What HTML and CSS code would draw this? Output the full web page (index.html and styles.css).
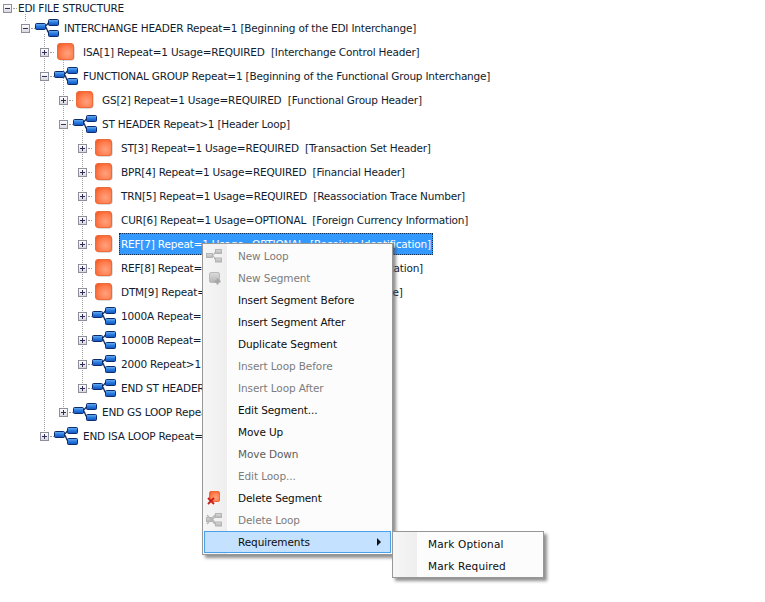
FILE: index.html
```html
<!DOCTYPE html>
<html lang="en">
<head>
<meta charset="utf-8">
<title>EDI File Structure</title>
<link rel="stylesheet" href="styles.css">
</head>
<body>
<svg class="defs" width="0" height="0" aria-hidden="true">
  <defs>
    <linearGradient id="blue" x1="0" y1="0" x2="0" y2="1"><stop offset="0" stop-color="#6fb4f2"/><stop offset=".5" stop-color="#2b7ae0"/><stop offset="1" stop-color="#0e50c0"/></linearGradient>
    <radialGradient id="seg" cx=".62" cy=".62" r=".72"><stop offset="0" stop-color="#ffa27e"/><stop offset=".6" stop-color="#ff7f50"/><stop offset="1" stop-color="#f5602c"/></radialGradient>
    <linearGradient id="grey" x1="0" y1="0" x2="0" y2="1"><stop offset="0" stop-color="#dcdcdc"/><stop offset="1" stop-color="#b4b4b4"/></linearGradient>
    <symbol id="loop" viewBox="0 0 24 18">
      <path d="M9 7.500C13 7.500 11.500 3.500 15 3.500M9 7.500C13 7.500 11.500 14.500 15 14.500" fill="none" stroke="#14305e" stroke-width="1.300"/>
      <rect x=".5" y="4.500" width="10" height="6" rx="1" fill="url(#blue)" stroke="#0c2c6a"/>
      <rect x="13.500" y=".5" width="10" height="6" rx="1" fill="url(#blue)" stroke="#0c2c6a"/>
      <rect x="13.500" y="11.500" width="10" height="6" rx="1" fill="url(#blue)" stroke="#0c2c6a"/>
    </symbol>
    <symbol id="segment" viewBox="0 0 18 18">
      <rect x="1.500" y="1.500" width="16" height="16" rx="3" fill="#c2bcb6"/>
      <rect x=".5" y=".5" width="16" height="16" rx="2.500" fill="url(#seg)" stroke="#ee6a38"/>
    </symbol>
    <symbol id="loop-off" viewBox="0 0 16 14">
      <path d="M6 6.500C9 6.500 8 2.500 10 2.500M6 6.500C9 6.500 8 11 10 11" fill="none" stroke="#aaa"/>
      <rect x=".5" y="4.500" width="6" height="4" fill="url(#grey)" stroke="#b4b4b4"/>
      <rect x="9.500" y=".5" width="6" height="4" fill="url(#grey)" stroke="#b4b4b4"/>
      <rect x="9.500" y="9" width="6" height="4" fill="url(#grey)" stroke="#b4b4b4"/>
    </symbol>
  </defs>
</svg>

<div class="tree">
  <svg class="guides" width="100" height="450" aria-hidden="true">
    <path d="M25.500 14V22M44.500 34V434M63.500 58V410M82.500 130V386" fill="none" stroke="#a0a0a0" stroke-dasharray="1 1"/>
  </svg>

  <div class="row root"><span class="exp minus"></span><span class="dots"></span><span class="label">EDI FILE STRUCTURE</span></div>
  <div class="row d1"><span class="exp minus"></span><span class="dots"></span><svg class="ico-loop"><use href="#loop"/></svg><span class="label">INTERCHANGE HEADER Repeat=1 [Beginning of the EDI Interchange]</span></div>
  <div class="row d2"><span class="exp plus"></span><span class="dots"></span><svg class="ico-seg"><use href="#segment"/></svg><span class="label">ISA[1] Repeat=1 Usage=REQUIRED&nbsp; [Interchange Control Header]</span></div>
  <div class="row d2"><span class="exp minus"></span><span class="dots"></span><svg class="ico-loop"><use href="#loop"/></svg><span class="label">FUNCTIONAL GROUP Repeat=1 [Beginning of the Functional Group Interchange]</span></div>
  <div class="row d3"><span class="exp plus"></span><span class="dots"></span><svg class="ico-seg"><use href="#segment"/></svg><span class="label">GS[2] Repeat=1 Usage=REQUIRED&nbsp; [Functional Group Header]</span></div>
  <div class="row d3"><span class="exp minus"></span><span class="dots"></span><svg class="ico-loop"><use href="#loop"/></svg><span class="label">ST HEADER Repeat&gt;1 [Header Loop]</span></div>
  <div class="row d4"><span class="exp plus"></span><span class="dots"></span><svg class="ico-seg"><use href="#segment"/></svg><span class="label">ST[3] Repeat=1 Usage=REQUIRED&nbsp; [Transaction Set Header]</span></div>
  <div class="row d4"><span class="exp plus"></span><span class="dots"></span><svg class="ico-seg"><use href="#segment"/></svg><span class="label">BPR[4] Repeat=1 Usage=REQUIRED&nbsp; [Financial Header]</span></div>
  <div class="row d4"><span class="exp plus"></span><span class="dots"></span><svg class="ico-seg"><use href="#segment"/></svg><span class="label">TRN[5] Repeat=1 Usage=REQUIRED&nbsp; [Reassociation Trace Number]</span></div>
  <div class="row d4"><span class="exp plus"></span><span class="dots"></span><svg class="ico-seg"><use href="#segment"/></svg><span class="label">CUR[6] Repeat=1 Usage=OPTIONAL&nbsp; [Foreign Currency Information]</span></div>
  <div class="row d4"><span class="exp plus"></span><span class="dots"></span><svg class="ico-seg"><use href="#segment"/></svg><span class="label selected">REF[7] Repeat=1 Usage=OPTIONAL&nbsp; [Receiver Identification]</span></div>
  <div class="row d4"><span class="exp plus"></span><span class="dots"></span><svg class="ico-seg"><use href="#segment"/></svg><span class="label">REF[8] Repeat=1 Usage=OPTIONAL&nbsp; [Sender Identification]</span></div>
  <div class="row d4"><span class="exp plus"></span><span class="dots"></span><svg class="ico-seg"><use href="#segment"/></svg><span class="label">DTM[9] Repeat=1 Usage=OPTIONAL&nbsp; [Production Date]</span></div>
  <div class="row d4"><span class="exp plus"></span><span class="dots"></span><svg class="ico-loop"><use href="#loop"/></svg><span class="label">1000A Repeat=1</span></div>
  <div class="row d4"><span class="exp plus"></span><span class="dots"></span><svg class="ico-loop"><use href="#loop"/></svg><span class="label">1000B Repeat=1</span></div>
  <div class="row d4"><span class="exp plus"></span><span class="dots"></span><svg class="ico-loop"><use href="#loop"/></svg><span class="label">2000 Repeat&gt;1</span></div>
  <div class="row d4"><span class="exp plus"></span><span class="dots"></span><svg class="ico-loop"><use href="#loop"/></svg><span class="label">END ST HEADER</span></div>
  <div class="row d3"><span class="exp plus"></span><span class="dots"></span><svg class="ico-loop"><use href="#loop"/></svg><span class="label">END GS LOOP Repeat</span></div>
  <div class="row d2"><span class="exp plus"></span><span class="dots"></span><svg class="ico-loop"><use href="#loop"/></svg><span class="label">END ISA LOOP Repeat=</span></div>
</div>

<div class="menu main-menu">
  <div class="item off"><svg class="mi mi-loop"><use href="#loop-off"/></svg>New Loop</div>
  <div class="item off"><svg class="mi" viewBox="0 0 16 16"><rect x="3.500" y="2.500" width="10" height="10" rx="1.500" fill="url(#grey)" stroke="#bbb"/><path d="M11.500 8.500v6M8.500 11.500h6" stroke="#a4a4a4" stroke-width="2"/></svg>New Segment</div>
  <div class="item">Insert Segment Before</div>
  <div class="item">Insert Segment After</div>
  <div class="item">Duplicate Segment</div>
  <div class="item off">Insert Loop Before</div>
  <div class="item off">Insert Loop After</div>
  <div class="item">Edit Segment...</div>
  <div class="item">Move Up</div>
  <div class="item off-soft">Move Down</div>
  <div class="item off">Edit Loop...</div>
  <div class="item"><svg class="mi" viewBox="0 0 16 16"><rect x="3.500" y="1.500" width="10" height="10" rx="1.500" fill="url(#seg)" stroke="#ee6a38"/><path d="M2 8l6 6M8 8l-6 6" stroke="#c8201a" stroke-width="1.800"/></svg>Delete Segment</div>
  <div class="item off"><svg class="mi mi-loop"><use href="#loop-off"/><path d="M1 2l8 9M9 2l-8 9" stroke="#b8b8b8" stroke-width="1.500"/></svg>Delete Loop</div>
  <div class="item active">Requirements<span class="arrow"></span></div>
</div>

<div class="menu sub-menu">
  <div class="item">Mark Optional</div>
  <div class="item">Mark Required</div>
</div>
</body>
</html>
```

FILE: styles.css
```css
html, body {
  margin: 0;
  padding: 0;
  background: #fff;
}
body {
  position: relative;
  width: 765px;
  height: 602px;
  overflow: hidden;
  font-family: "DejaVu Sans", "Liberation Sans", sans-serif;
  font-size: 10.5px;
  color: #101c30;
}
.defs { position: absolute; }

.tree { position: relative; }
.guides { position: absolute; left: 0; top: 0; }

.row {
  position: relative;
  display: flex;
  align-items: center;
  height: 24px;
  white-space: nowrap;
}
.root { height: 16px; padding-left: 3px; }
.d1 { padding-left: 21px; }
.d2 { padding-left: 40px; }
.d3 { padding-left: 59px; }
.d4 { padding-left: 78px; }

.exp {
  position: relative;
  flex: none;
  box-sizing: border-box;
  width: 9px;
  height: 9px;
  border: 1px solid #8f8f9c;
  background: linear-gradient(#fff, #d8d8de);
}
.exp::before {
  content: "";
  position: absolute;
  left: 1px;
  top: 3px;
  width: 5px;
  height: 1px;
  background: #30305a;
}
.plus::after {
  content: "";
  position: absolute;
  left: 3px;
  top: 1px;
  width: 1px;
  height: 5px;
  background: #30305a;
}
.dots {
  flex: none;
  width: 4px;
  margin: 0 1px;
  border-top: 1px dotted #a0a0a0;
}
.ico-loop { flex: none; width: 24px; height: 18px; margin-left: -1px; }
.ico-seg { flex: none; width: 18px; height: 18px; margin-left: 2px; }

.label {
  margin-left: 5px;
  letter-spacing: -0.2px;
}
.root .label { margin-left: 0; }
.ico-seg + .label { margin-left: 8px; }
.selected {
  margin-left: 6px !important;
  box-sizing: border-box;
  width: 314px;
  height: 22px;
  line-height: 20px;
  padding-left: 1px;
  color: #fff;
  background: #3399ff;
  border: 1px dotted #10305c;
}

.menu {
  position: absolute;
  box-sizing: border-box;
  border: 1px solid #979797;
  padding: 1px;
  background: linear-gradient(to right, #f6f6f6 0, #eeeeee 24px, #fcfcfc 24px);
  box-shadow: 3px 3px 3px rgba(70, 70, 70, .6);
  color: #0d0d0d;
}
.main-menu { left: 202px; top: 243px; width: 191px; height: 312px; }
.sub-menu { left: 392px; top: 531px; width: 152px; height: 47px; }
.item {
  position: relative;
  box-sizing: border-box;
  height: 22px;
  line-height: 22px;
  padding-left: 34px;
  white-space: nowrap;
  letter-spacing: -0.1px;
}
.sub-menu .item { letter-spacing: 0.15px; }
.off { color: #7c7c7c; }
.off-soft { color: #5c5c5c; }
.active {
  line-height: 20px;
  border: 1px solid #4aa0ea;
  background: #c4e1ff;
  padding-left: 33px;
}
.arrow {
  position: absolute;
  right: 9px;
  top: 6px;
  border-left: 4px solid #111;
  border-top: 4px solid transparent;
  border-bottom: 4px solid transparent;
}
.mi {
  position: absolute;
  left: 2px;
  top: 3px;
  width: 16px;
  height: 16px;
}
.mi-loop { height: 14px; top: 4px; }
```
